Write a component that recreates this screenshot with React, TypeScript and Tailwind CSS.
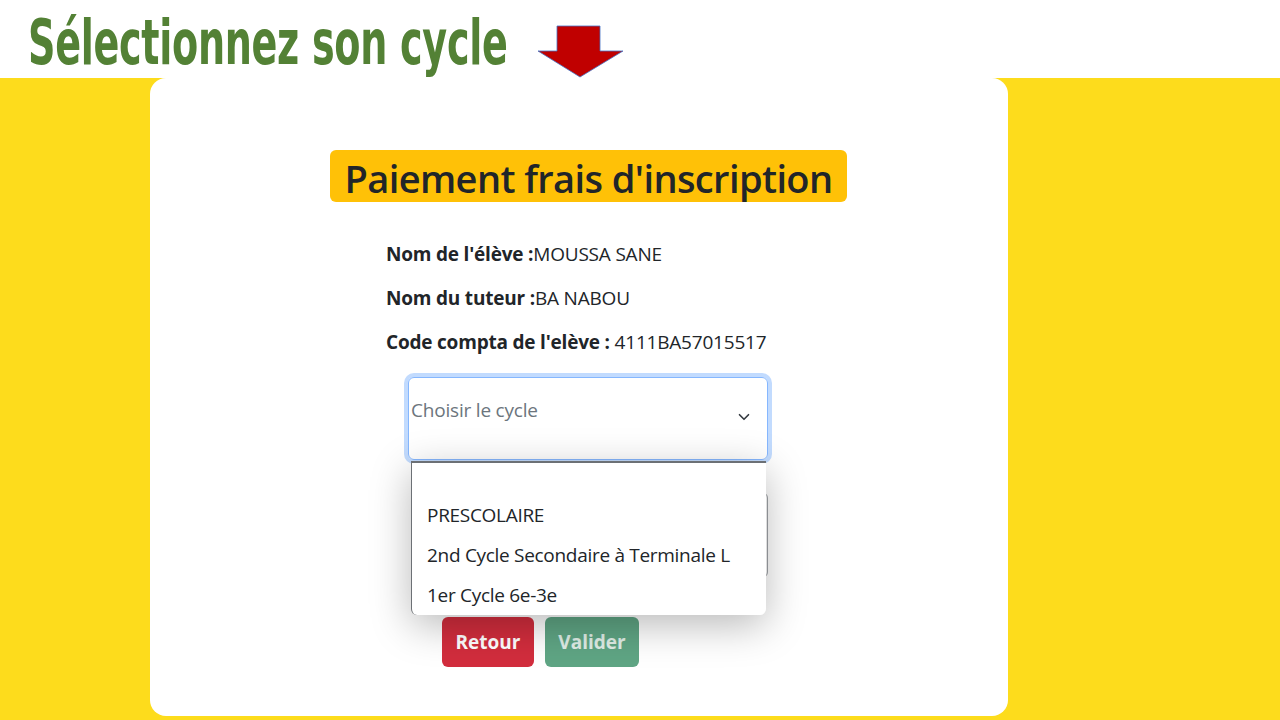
import { ChevronDown } from 'lucide-react';

const cycles = ['PRESCOLAIRE', '2nd Cycle Secondaire à Terminale L', '1er Cycle 6e-3e'];

export default function App() {
  return (
    <div className="w-[1280px] h-[720px] overflow-hidden bg-white font-['Open_Sans',sans-serif] text-[#212529]">
      <div className="h-[78px] flex items-center pl-[28px] gap-[29px]">
        <h1 className="w-[480px] shrink-0 pt-[8px] whitespace-nowrap font-['DejaVu_Sans',sans-serif] font-bold text-[62px] leading-none text-[#538135] tracking-[-0.5px]">
          <span className="inline-block origin-left scale-x-[0.615]">Sélectionnez son cycle</span>
        </h1>
        <svg width="88" height="54" viewBox="0 0 88 54" className="mt-[26px] shrink-0">
          <path d="M20 1 H63 V26 H86 L43 52 L1 26 H20 Z" fill="#c00000" stroke="#4472c4" strokeWidth="0.8" />
        </svg>
      </div>

      <div className="h-[642px] bg-[#fddc1c] pl-[150px]">
        <div className="relative w-[858px] h-[638px] bg-white rounded-2xl flex flex-col">
          <div className="ml-[180px] mt-[72px] w-[517px] h-[52px] rounded-md bg-[#ffc107] flex items-center justify-center">
            <h2 className="text-[38px] leading-none font-semibold tracking-[-0.6px] pt-[4px]">Paiement frais d'inscription</h2>
          </div>

          <div className="ml-[236px] mt-[40px] flex flex-col gap-[20px] text-[19px] leading-[24px] tracking-[-0.2px]">
            <p><span className="font-bold">Nom de l'élève :</span>MOUSSA SANE</p>
            <p><span className="font-bold">Nom du tuteur :</span>BA NABOU</p>
            <p><span className="font-bold">Code compta de l'elève :</span> 4111BA57015517</p>
          </div>

          <div className="ml-[258px] mt-[23px] w-[360px] h-[83px] rounded-md border border-[#86b7fe] ring-4 ring-[#c2dbfe] flex items-start justify-between pl-[2px] pr-[14px] pt-[18px]">
            <span className="text-[19px] text-[#6c757d] tracking-[-0.2px]">Choisir le cycle</span>
            <ChevronDown size={18} strokeWidth={2.2} className="mt-[12px] text-[#343a40]" />
          </div>

          <div className="ml-[261px] mt-[32px] w-[357px] h-[86px] rounded-md border border-[#a0a4a8]" />

          <div className="ml-[292px] mt-[39px] flex gap-[11px]">
            <button className="w-[92px] h-[50px] rounded-md bg-[#d22d3d] text-white font-bold text-[19px]">Retour</button>
            <button className="w-[94px] h-[50px] rounded-md bg-[#5fa584] text-white/80 font-bold text-[19px]">Valider</button>
          </div>

          <div className="absolute left-[261px] top-[383px] w-[355px] h-[154px] bg-white border-t-2 border-t-[#6c7075] border-l border-l-[#6c7075] rounded-b-md shadow-[0_10px_40px_rgba(0,0,0,0.28)] pt-[38px] pl-[15px] flex flex-col gap-[12px] text-[19px] leading-[28px] tracking-[-0.3px]">
            {cycles.map((c) => (
              <div key={c}>{c}</div>
            ))}
          </div>
        </div>
      </div>
    </div>
  );
}
